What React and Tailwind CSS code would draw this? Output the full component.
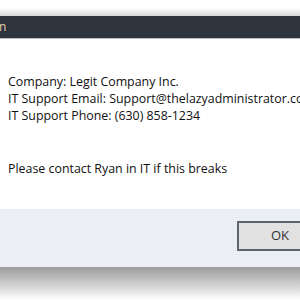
import React from "react";

const App = () => {
  return (
    <div
      className="w-[300px] h-[300px] overflow-hidden bg-white flex flex-col"
      style={{ fontFamily: '"Open Sans", "Noto Sans", sans-serif' }}
    >
      <div className="h-[16px] bg-gradient-to-b from-white via-white to-[#d8d8d8]" />
      <div className="h-[23px] bg-[#2e343e] flex items-center border-b border-[#b9bcc0] overflow-hidden">
        <span className="text-[12px] text-[#e9cfa8] ml-[-1px] leading-none">n</span>
      </div>
      <div className="h-[170px] bg-white pl-[8px] pt-[34px] text-[12.4px] leading-[17px] text-[#111]">
        <p className="whitespace-nowrap">Company: Legit Company Inc.</p>
        <p className="whitespace-nowrap">IT Support Email: Support@thelazyadministrator.com</p>
        <p className="whitespace-nowrap">IT Support Phone: (630) 858-1234</p>
        <p className="mt-[36px] whitespace-nowrap">Please contact Ryan in IT if this breaks</p>
      </div>
      <div className="h-[58px] bg-[#ebeef2] flex pt-[12px] pl-[237px]">
        <button className="w-[86px] h-[30px] shrink-0 bg-[#e1e1e1] border-2 border-[#5b6570] text-[13px] text-[#333] flex items-center justify-center">
          OK
        </button>
      </div>
      <div className="flex-1 bg-gradient-to-b from-[#9c9c9c] to-white" />
    </div>
  );
};

export default App;
